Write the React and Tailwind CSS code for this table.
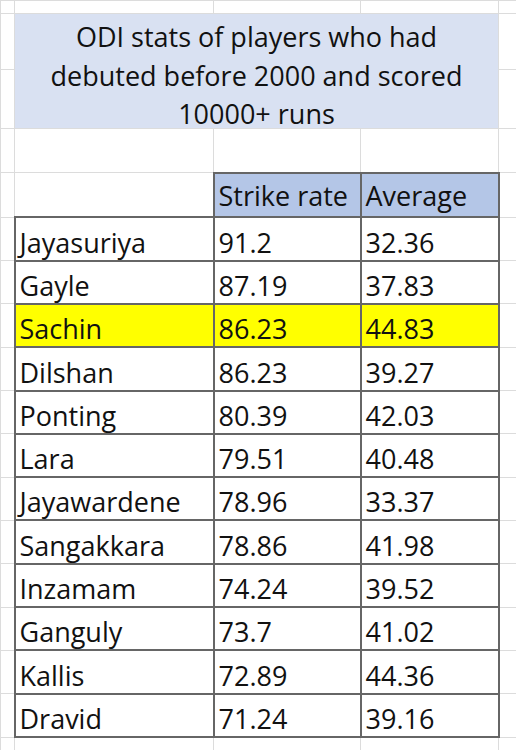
const players = [
  { name: 'Jayasuriya', sr: '91.2', avg: '32.36' },
  { name: 'Gayle', sr: '87.19', avg: '37.83' },
  { name: 'Sachin', sr: '86.23', avg: '44.83', highlight: true },
  { name: 'Dilshan', sr: '86.23', avg: '39.27' },
  { name: 'Ponting', sr: '80.39', avg: '42.03' },
  { name: 'Lara', sr: '79.51', avg: '40.48' },
  { name: 'Jayawardene', sr: '78.96', avg: '33.37' },
  { name: 'Sangakkara', sr: '78.86', avg: '41.98' },
  { name: 'Inzamam', sr: '74.24', avg: '39.52' },
  { name: 'Ganguly', sr: '73.7', avg: '41.02' },
  { name: 'Kallis', sr: '72.89', avg: '44.36' },
  { name: 'Dravid', sr: '71.24', avg: '39.16' },
]

// light spreadsheet gridline cell
const grid = 'border border-[#dcdcdc]'
// dark bordered table cell
const cell = 'border-2 border-[#666666] align-bottom pl-[4px] leading-[27px] whitespace-nowrap'

function App() {
  return (
    <div className="w-[516px] h-[750px] overflow-hidden bg-white text-[#111111] font-['Open_Sans',sans-serif] text-[27px]">
      <table className="w-[516px] table-fixed border-collapse">
        <colgroup>
          <col className="w-[14px]" />
          <col className="w-[199px]" />
          <col className="w-[147px]" />
          <col className="w-[138px]" />
          <col className="w-[18px]" />
        </colgroup>
        <tbody>
          <tr className="h-[13px]">
            <td className={grid} />
            <td className={grid} />
            <td className={grid} />
            <td className={grid} />
            <td className={grid} />
          </tr>
          <tr className="h-[56px]">
            <td className={grid} />
            <td colSpan={3} rowSpan={2} className={`${grid} bg-[#d9e1f2] align-top`}>
              <div className="h-[113px] pt-[4px] text-center leading-[38.5px] overflow-visible">
                ODI stats of players who had
                <br />
                debuted before 2000 and scored
                <br />
                10000+ runs
              </div>
            </td>
            <td className={grid} />
          </tr>
          <tr className="h-[59px]">
            <td className={grid} />
            <td className={grid} />
          </tr>
          <tr className="h-[44px]">
            <td className={grid} />
            <td className={grid} />
            <td className={grid} />
            <td className={grid} />
            <td className={grid} />
          </tr>
          <tr className="h-[44.7px]">
            <td className={grid} />
            <td className={grid} />
            <td className={`${cell} bg-[#b4c6e7] pb-[7px]`}>Strike rate</td>
            <td className={`${cell} bg-[#b4c6e7] pb-[7px]`}>Average</td>
            <td className={grid} />
          </tr>
          {players.map((p) => {
            const bg = p.highlight ? 'bg-[#ffff00]' : 'bg-white'
            return (
              <tr key={p.name} className="h-[43.33px]">
                <td className={grid} />
                <td className={`${cell} ${bg} pb-[4px]`}>{p.name}</td>
                <td className={`${cell} ${bg} pb-[4px]`}>{p.sr}</td>
                <td className={`${cell} ${bg} pb-[4px]`}>{p.avg}</td>
                <td className={grid} />
              </tr>
            )
          })}
          <tr className="h-[14px]">
            <td className={grid} />
            <td className={grid} />
            <td className={grid} />
            <td className={grid} />
            <td className={grid} />
          </tr>
        </tbody>
      </table>
    </div>
  )
}

export default App
